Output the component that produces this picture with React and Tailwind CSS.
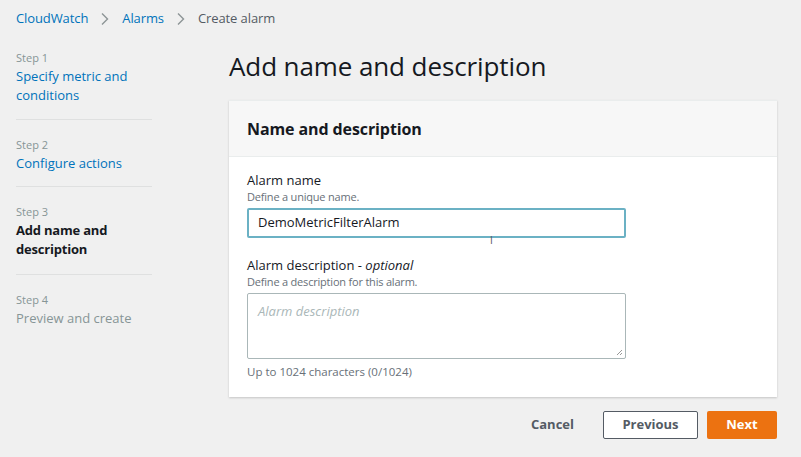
import React from "react";

const steps = [
  { step: "Step 1", label: ["Specify metric and", "conditions"], state: "link" },
  { step: "Step 2", label: ["Configure actions"], state: "link" },
  { step: "Step 3", label: ["Add name and", "description"], state: "active" },
  { step: "Step 4", label: ["Preview and create"], state: "disabled" },
];

function Chevron() {
  return (
    <svg width="10" height="14" viewBox="0 0 10 14" className="mx-[12px]">
      <path d="M2 1.5 L7.5 7 L2 12.5" fill="none" stroke="#8d9496" strokeWidth="1.4" />
    </svg>
  );
}

export default function App() {
  return (
    <div
      className="relative w-[801px] h-[457px] bg-[#f0f0f0] overflow-hidden text-[#16191f]"
      style={{ fontFamily: '"Open Sans", "Noto Sans", sans-serif' }}
    >
      {/* breadcrumb */}
      <div className="flex items-center h-[38px] pl-[16px] text-[13px] tracking-[-0.1px]">
        <span className="text-[#0073bb]">CloudWatch</span>
        <Chevron />
        <span className="text-[#0073bb]">Alarms</span>
        <Chevron />
        <span className="text-[#545b64]">Create alarm</span>
      </div>

      <div className="flex">
        {/* step nav */}
        <div className="w-[136px] ml-[16px] mt-[10px] shrink-0">
          {steps.map((s, i) => (
            <div
              key={s.step}
              className={
                "pt-[2px] " +
                (i < steps.length - 1 ? "border-b border-[#dfe0e0] mb-[15px] " : "") +
                (s.state === "active" ? "pb-[15px]" : i === 0 ? "pb-[14px]" : "pb-[13px]")
              }
            >
              <div className="text-[11px] leading-[16px] text-[#879596]">{s.step}</div>
              <div
                className={
                  "text-[13px] leading-[19px] mt-[1px] " +
                  (s.state === "link"
                    ? "text-[#0073bb]"
                    : s.state === "active"
                    ? "text-[#16191f] font-bold tracking-[-0.2px]"
                    : "text-[#879596]")
                }
              >
                {s.label.map((l) => (
                  <div key={l}>{l}</div>
                ))}
              </div>
            </div>
          ))}
        </div>

        {/* main */}
        <div className="ml-[77px] w-[548px]">
          <h1 className="text-[26px] leading-[36px] mt-[10px] text-[#16191f] tracking-[-0.1px]">
            Add name and description
          </h1>

          <div className="mt-[16px] bg-white shadow-[0_1px_2px_rgba(0,0,0,0.18)] border-t border-[#eaeded]">
            <div className="h-[56px] bg-[#f7f7f7] border-b border-[#eaeded] flex items-center px-[18px]">
              <h2 className="text-[16px] font-bold text-[#16191f] tracking-[-0.1px]">Name and description</h2>
            </div>
            <div className="px-[18px] pt-[14px] pb-[17px]">
              <div className="text-[13px] leading-[18px]">Alarm name</div>
              <div className="text-[11px] leading-[16px] text-[#687078] tracking-[-0.2px]">Define a unique name.</div>
              <div className="mt-[3px] w-[379px] h-[30px] border-2 border-[#6bb1c4] rounded-[2px] flex items-center px-[9px] text-[13px] text-[#16191f]">
                DemoMetricFilterAlarm
              </div>

              <div className="text-[13px] leading-[18px] mt-[18px]">
                Alarm description - <i>optional</i>
              </div>
              <div className="text-[11px] leading-[16px] text-[#687078] tracking-[-0.2px]">
                Define a description for this alarm.
              </div>
              <div className="relative mt-[3px] w-[379px] h-[66px] border border-[#aab7b8] rounded-[2px] px-[10px] pt-[4px]">
                <span className="text-[13px] italic text-[#aab7b8]">Alarm description</span>
                <svg width="7" height="7" viewBox="0 0 7 7" className="absolute right-[2px] bottom-[2px]">
                  <path d="M1 6 L6 1 M4 6 L6 4" stroke="#999" strokeWidth="1" />
                </svg>
              </div>
              <div className="text-[11.5px] leading-[16px] text-[#687078] mt-[5px]">
                Up to 1024 characters (0/1024)
              </div>
            </div>
          </div>

          <div className="flex items-center justify-end mt-[14px] text-[13px] font-bold">
            <span className="text-[#545b64] mr-[29px]">Cancel</span>
            <div className="w-[95px] h-[28px] border border-[#545b64] bg-white rounded-[2px] flex items-center justify-center text-[#545b64]">
              Previous
            </div>
            <div className="ml-[9px] w-[70px] h-[28px] bg-[#ec7211] rounded-[2px] flex items-center justify-center text-white">
              Next
            </div>
          </div>
        </div>
      </div>

      {/* mouse cursor */}
      <div className="absolute left-[490px] top-[235px] text-[10px] text-[#555] leading-none">
        I
      </div>
    </div>
  );
}
